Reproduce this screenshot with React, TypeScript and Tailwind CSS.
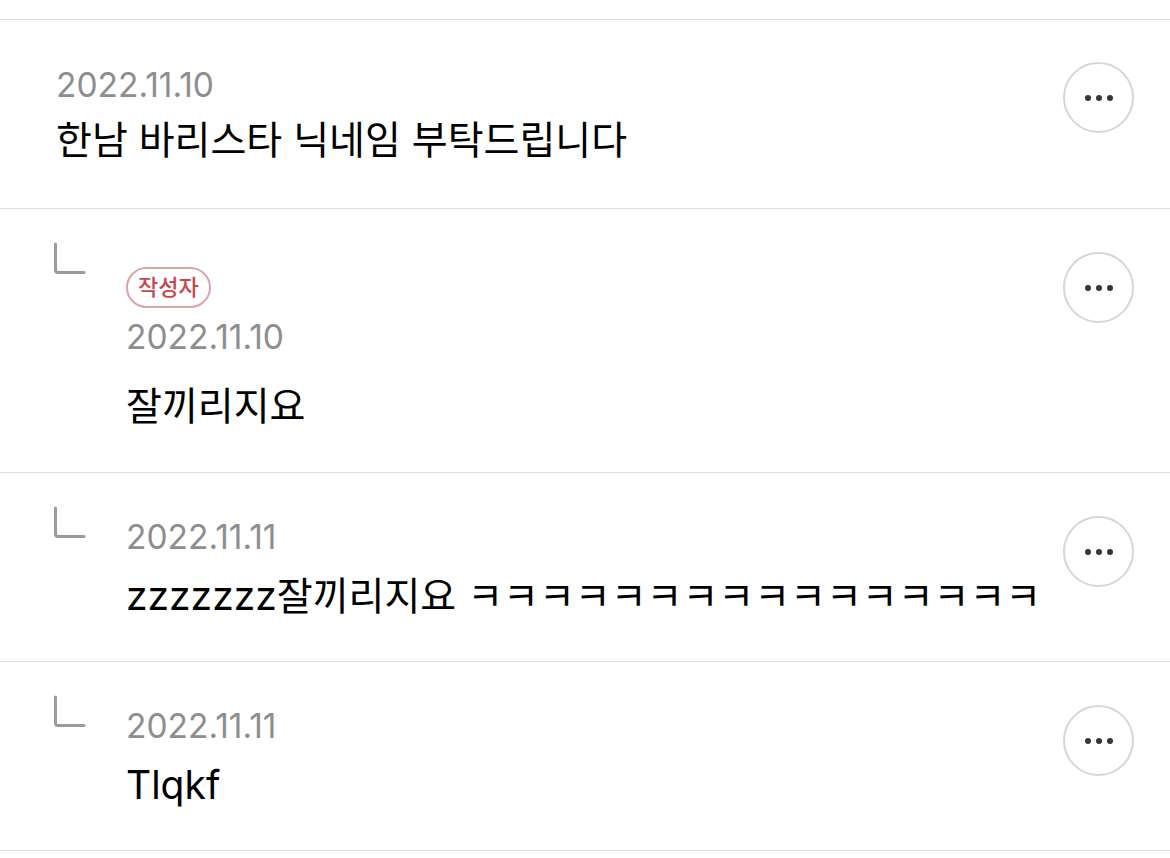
type Comment = {
  id: number
  date: string
  text: string
  reply?: boolean
  author?: boolean
}

const comments: Comment[] = [
  { id: 1, date: "2022.11.10", text: "한남 바리스타 닉네임 부탁드립니다" },
  { id: 2, date: "2022.11.10", text: "잘끼리지요", reply: true, author: true },
  { id: 3, date: "2022.11.11", text: "zzzzzzz잘끼리지요 ㅋㅋㅋㅋㅋㅋㅋㅋㅋㅋㅋㅋㅋㅋㅋㅋ", reply: true },
  { id: 4, date: "2022.11.11", text: "Tlqkf", reply: true },
]

function MoreButton() {
  return (
    <button className="w-[71px] h-[71px] shrink-0 rounded-full border-2 border-[#d6d6d6] flex items-center justify-center gap-[5px]">
      <span className="w-[6px] h-[6px] rounded-full bg-[#363636]" />
      <span className="w-[6px] h-[6px] rounded-full bg-[#363636]" />
      <span className="w-[6px] h-[6px] rounded-full bg-[#363636]" />
    </button>
  )
}

function ReplyMark() {
  return (
    <svg width="34" height="34" viewBox="0 0 34 34" className="shrink-0">
      <path d="M3.5 2 V28 Q3.5 30.5 6 30.5 H32" fill="none" stroke="#9b9b9b" strokeWidth="3" strokeLinecap="round" />
    </svg>
  )
}

function CommentRow({ c }: { c: Comment }) {
  if (!c.reply) {
    return (
      <div className="flex items-start justify-between border-b border-[#dedede] pl-[56px] pr-[36px] pt-[42px] pb-[44px]">
        <div className="pt-[3px]">
          <div className="text-[33.5px] leading-[40px] text-[#8e8e8e]">{c.date}</div>
          <div className="mt-[11px] text-[39px] leading-[48px] text-black">{c.text}</div>
        </div>
        <MoreButton />
      </div>
    )
  }
  return (
    <div className={`flex items-start border-b border-[#dedede] pl-[52px] pr-[36px] pt-[33px] ${c.author ? "pb-[42px]" : "pb-[41px]"}`}>
      <ReplyMark />
      <div className={`flex-1 ml-[40px] ${c.author ? "pt-[25px]" : "pt-[11px]"}`}>
        {c.author && (
          <div className="mb-[9px] inline-flex items-center h-[41px] px-[10px] rounded-full border-2 border-[#dda4a6] text-[22px] font-medium text-[#c7474d]">
            작성자
          </div>
        )}
        <div className="text-[33.5px] leading-[40px] text-[#8e8e8e]">{c.date}</div>
        <div className={`${c.author ? "mt-[25px]" : "mt-[15px]"} text-[39px] leading-[48px] text-black whitespace-nowrap`}>{c.text}</div>
      </div>
      <div className="pt-[10px]">
        <MoreButton />
      </div>
    </div>
  )
}

export default function App() {
  return (
    <div className="min-h-screen bg-white pt-[19px] font-['Inter','Noto_Sans_CJK_KR',sans-serif]">
      <div className="border-t border-[#dedede]">
        {comments.map((c) => (
          <CommentRow key={c.id} c={c} />
        ))}
      </div>
    </div>
  )
}
